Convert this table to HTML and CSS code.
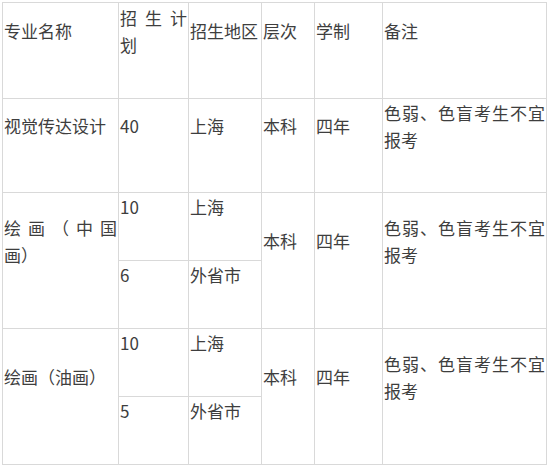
FILE: index.html
```html
<!DOCTYPE html>
<html lang="zh-CN">
<head>
<meta charset="utf-8">
<link rel="stylesheet" href="styles.css">
</head>
<body>
<table class="plan">
  <colgroup>
    <col class="c-name">
    <col class="c-num">
    <col class="c-area">
    <col class="c-level">
    <col class="c-years">
    <col class="c-note">
  </colgroup>
  <tr class="r-head">
    <td>专业名称</td>
    <td>招生计划</td>
    <td>招生地区</td>
    <td>层次</td>
    <td>学制</td>
    <td>备注</td>
  </tr>
  <tr class="r-two">
    <td>视觉传达设计</td>
    <td>40</td>
    <td>上海</td>
    <td>本科</td>
    <td>四年</td>
    <td>色弱、色盲考生不宜报考</td>
  </tr>
  <tr class="r-one">
    <td rowspan="2">绘画（中国画）</td>
    <td>10</td>
    <td>上海</td>
    <td rowspan="2">本科</td>
    <td rowspan="2">四年</td>
    <td rowspan="2">色弱、色盲考生不宜报考</td>
  </tr>
  <tr class="r-one">
    <td>6</td>
    <td>外省市</td>
  </tr>
  <tr class="r-one">
    <td rowspan="2">绘画（油画）</td>
    <td>10</td>
    <td>上海</td>
    <td rowspan="2">本科</td>
    <td rowspan="2">四年</td>
    <td rowspan="2">色弱、色盲考生不宜报考</td>
  </tr>
  <tr class="r-one">
    <td>5</td>
    <td>外省市</td>
  </tr>
</table>
</body>
</html>
```
FILE: styles.css
```css
html, body {
  margin: 0;
  padding: 0;
  background: #ffffff;
}

body {
  padding: 2px 0 0 2px;
}

.plan {
  border-collapse: collapse;
  table-layout: fixed;
  width: 544px;
  font-family: "Noto Sans CJK SC", "Microsoft YaHei", sans-serif;
  font-size: 17px;
  line-height: 26.5px;
  color: #3e3e3e;
  text-spacing-trim: space-all;
}

.c-name { width: 116px; }
.c-num { width: 70px; }
.c-area { width: 73px; }
.c-level { width: 53px; }
.c-years { width: 68px; }
.c-note { width: 164px; }

.plan td {
  border: 1px solid #d9d9d9;
  padding: 1px 1px 39px 1px;
  vertical-align: middle;
  text-align: justify;
  word-break: break-all;
}

.r-head { height: 96px; }
.r-two { height: 94px; }
.r-one { height: 68px; }
```
